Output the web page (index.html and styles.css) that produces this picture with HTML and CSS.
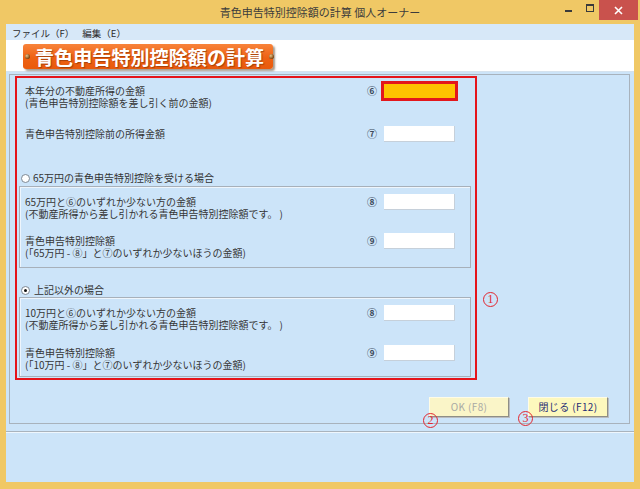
FILE: index.html
```html
<!DOCTYPE html>
<html lang="ja">
<head>
<meta charset="utf-8">
<title>青色申告特別控除額の計算</title>
<link rel="stylesheet" href="styles.css">
</head>
<body>
<div class="window">
  <div class="titlebar">
    <span class="title">青色申告特別控除額の計算 個人オーナー</span>
    <div class="controls">
      <span class="ctl ctl-min"><i class="min-bar"></i></span>
      <span class="ctl ctl-max"><i class="max-box"></i></span>
      <span class="ctl ctl-close">
        <svg width="9" height="9" viewBox="0 0 9 9"><path d="M1 1 L8 8 M8 1 L1 8" stroke="#fff" stroke-width="1.6" fill="none"/></svg>
      </span>
    </div>
  </div>
  <div class="client">
    <div class="menubar">
      <span class="menu-item">ファイル（<u>F</u>）</span>
      <span class="menu-item">編集（<u>E</u>）</span>
    </div>
    <div class="header">
      <div class="banner"><i class="dot"></i><span class="banner-text">青色申告特別控除額の計算</span><i class="dot"></i></div>
    </div>
    <div class="panel">
      <div class="redbox">
        <div class="row row-a">
          <div class="label"><div>本年分の不動産所得の金額</div><div>(青色申告特別控除額を差し引く前の金額)</div></div>
          <div class="field"><span class="num">⑥</span><span class="input active"></span></div>
        </div>
        <div class="row row-b">
          <div class="label"><div>青色申告特別控除前の所得金額</div></div>
          <div class="field"><span class="num">⑦</span><span class="input"></span></div>
        </div>
        <div class="radio-row radio-1"><span class="radio"></span><span>65万円の青色申告特別控除を受ける場合</span></div>
        <div class="group group-1">
          <div class="row grow-1">
            <div class="label"><div>65万円と⑥のいずれか少ない方の金額</div><div>(不動産所得から差し引かれる青色申告特別控除額です。 )</div></div>
            <div class="field"><span class="num">⑧</span><span class="input"></span></div>
          </div>
          <div class="row grow-2">
            <div class="label"><div>青色申告特別控除額</div><div>(「65万円 - ⑧」と⑦のいずれか少ないほうの金額)</div></div>
            <div class="field"><span class="num">⑨</span><span class="input"></span></div>
          </div>
        </div>
        <div class="radio-row radio-2"><span class="radio checked"></span><span>上記以外の場合</span></div>
        <div class="group group-2">
          <div class="row grow-1">
            <div class="label"><div>10万円と⑥のいずれか少ない方の金額</div><div>(不動産所得から差し引かれる青色申告特別控除額です。 )</div></div>
            <div class="field"><span class="num">⑧</span><span class="input"></span></div>
          </div>
          <div class="row grow-2b">
            <div class="label"><div>青色申告特別控除額</div><div>(「10万円 - ⑧」と⑦のいずれか少ないほうの金額)</div></div>
            <div class="field"><span class="num">⑨</span><span class="input"></span></div>
          </div>
        </div>
      </div>
      <div class="buttons">
        <button class="btn disabled">OK (F8)</button>
        <button class="btn">閉じる (F12)</button>
      </div>
      <span class="anno anno-1">1</span>
      <span class="anno anno-2">2</span>
      <span class="anno anno-3">3</span>
    </div>
    <div class="status"></div>
  </div>
</div>
</body>
</html>
```
FILE: styles.css
```css
html, body {
  margin: 0;
  padding: 0;
}
body {
  width: 640px;
  height: 489px;
  overflow: hidden;
  font-family: "Noto Sans CJK JP", "Noto Sans", sans-serif;
  color: #333;
}
.window {
  width: 640px;
  height: 489px;
  background: #f0c865;
  display: flex;
  flex-direction: column;
}
.titlebar {
  height: 24px;
  flex: none;
  display: grid;
  grid-template-columns: 1fr auto 1fr;
  align-items: start;
}
.title {
  grid-column: 2;
  font-size: 11px;
  line-height: 24px;
  color: #3c3c3c;
  white-space: nowrap;
}
.controls {
  grid-column: 3;
  justify-self: end;
  display: flex;
  padding-right: 2px;
  height: 20px;
}
.ctl {
  height: 20px;
  display: flex;
  align-items: center;
  justify-content: center;
}
.ctl-min { width: 25px; }
.ctl-max { width: 18px; align-items: flex-start; padding-top: 4px; box-sizing: border-box; }
.ctl-close { width: 39px; background: #c9524d; }
.min-bar {
  display: block;
  width: 7px;
  height: 2px;
  background: #3a3a3a;
  margin-top: 2px;
}
.max-box {
  display: block;
  width: 8px;
  height: 8px;
  box-sizing: border-box;
  border: 1px solid #3a3a3a;
  border-top-width: 2px;
}
.client {
  flex: 1;
  margin: 0 6px 7px;
  background: #cce4f9;
  display: flex;
  flex-direction: column;
}
.menubar {
  height: 16px;
  box-sizing: border-box;
  padding: 2px 0 0 6px;
  display: flex;
  gap: 8px;
  font-size: 9.5px;
  line-height: 14px;
  background: #d7e8f8;
  color: #2c2c2c;
}
.menu-item u { text-decoration: none; }
.header {
  height: 32px;
  box-sizing: border-box;
  background: #fff;
  border-bottom: 1px solid #d5e2ee;
  padding: 4px 0 0 17px;
}
.banner {
  width: 250px;
  height: 25px;
  box-sizing: border-box;
  border-radius: 3px;
  background: linear-gradient(#f8833a, #ee6214 55%, #e95a0c);
  box-shadow: 2px 2px 2px rgba(60, 30, 0, 0.45);
  display: flex;
  align-items: center;
  padding: 0 3px 0 2px;
  gap: 5px;
}
.banner-text {
  color: #fff;
  font-size: 19px;
  font-weight: 700;
  line-height: 25px;
  letter-spacing: 0.1px;
  text-shadow: 1px 1px 1px rgba(110, 40, 0, 0.55);
  white-space: nowrap;
}
.dot {
  display: block;
  width: 5px;
  height: 5px;
  border-radius: 50%;
  background: radial-gradient(circle at 35% 35%, #e9c38a, #7a4410 70%);
  flex: none;
}
.panel {
  position: relative;
  height: 350px;
  box-sizing: border-box;
  margin: 2px 4px 0 3px;
  border: 1px solid #a8b2bc;
  display: flex;
  flex-direction: column;
}
.redbox {
  width: 462px;
  height: 304px;
  box-sizing: border-box;
  margin: 1px 0 0 5px;
  border: 2px solid #e5141b;
  padding: 0 4px 0 2px;
  font-size: 10px;
  line-height: 12px;
}
.row {
  display: flex;
  justify-content: space-between;
  align-items: flex-start;
  padding: 0 16px 0 6px;
}
.label { white-space: pre; color: #363636; }
.field {
  display: flex;
  align-items: center;
}
.num {
  font-size: 10px;
  line-height: 12px;
  font-weight: 700;
  color: #3d4b5c;
  margin-right: 7px;
}
.input {
  display: block;
  width: 71px;
  height: 16px;
  box-sizing: border-box;
  background: #fff;
  border-right: 1px solid #c6d0da;
  border-bottom: 1px solid #c6d0da;
}
.input.active {
  height: 14px;
  border: none;
  background: #fec300;
  outline: 3px solid #e3171c;
}
.row-a { margin-top: 6px; }
.row-a .label { margin-top: 1px; }
.row-b { margin-top: 17px; }
.row-b .label { margin-top: 2px; }
.radio-row {
  display: flex;
  align-items: center;
  gap: 3px;
  padding-left: 2px;
  height: 12px;
}
.radio {
  display: flex;
  align-items: center;
  justify-content: center;
  width: 9px;
  height: 9px;
  box-sizing: border-box;
  border: 1px solid #7d8894;
  border-radius: 50%;
  background: #fff;
}
.radio.checked::after {
  content: "";
  width: 3px;
  height: 3px;
  border-radius: 50%;
  background: #111;
}
.radio-1 { margin-top: 30px; }
.radio-2 { margin-top: 16px; gap: 4px; }
.group {
  border: 1px solid #a7b0ba;
  box-shadow: inset 1px 1px 0 #eef5fc;
  padding: 7px 15px 8px 5px;
}
.group .row { padding: 0; }
.group .label { margin-top: 2px; }
.group-1 { margin-top: 2px; }
.group-2 { margin-top: 1px; padding-bottom: 5px; }
.grow-2 { margin-top: 13px; }
.grow-2b { margin-top: 14px; }
.buttons {
  display: flex;
  justify-content: flex-end;
  gap: 19px;
  margin-top: 17px;
  padding-right: 21px;
}
.btn {
  width: 80px;
  height: 20px;
  box-sizing: border-box;
  margin: 0;
  padding: 0;
  background: #fdf8bd;
  border: 1px solid;
  border-color: #fffce6 #8e8e86 #8e8e86 #fffce6;
  box-shadow: 1px 1px 0 #b9bcc0;
  font-family: "Noto Sans CJK JP", sans-serif;
  font-size: 10px;
  line-height: 16px;
  letter-spacing: 0.4px;
  color: #1f2c74;
}
.btn.disabled {
  background: #faf5c8;
  color: #a9a9a4;
}
.anno {
  position: absolute;
  width: 15px;
  height: 15px;
  box-sizing: border-box;
  border: 1px solid #e3262e;
  border-radius: 50%;
  color: #e3262e;
  font-family: "Liberation Serif", serif;
  font-size: 12px;
  line-height: 13px;
  text-align: center;
}
.anno-1 { left: 473px; top: 217px; }
.anno-2 { left: 413px; top: 338px; }
.anno-3 { left: 508px; top: 336px; }
.status {
  height: 51px;
  box-sizing: border-box;
  margin-top: 7px;
  border-top: 1px solid #a9b3bd;
  box-shadow: inset 0 1px 0 #eef6fd;
}
```
